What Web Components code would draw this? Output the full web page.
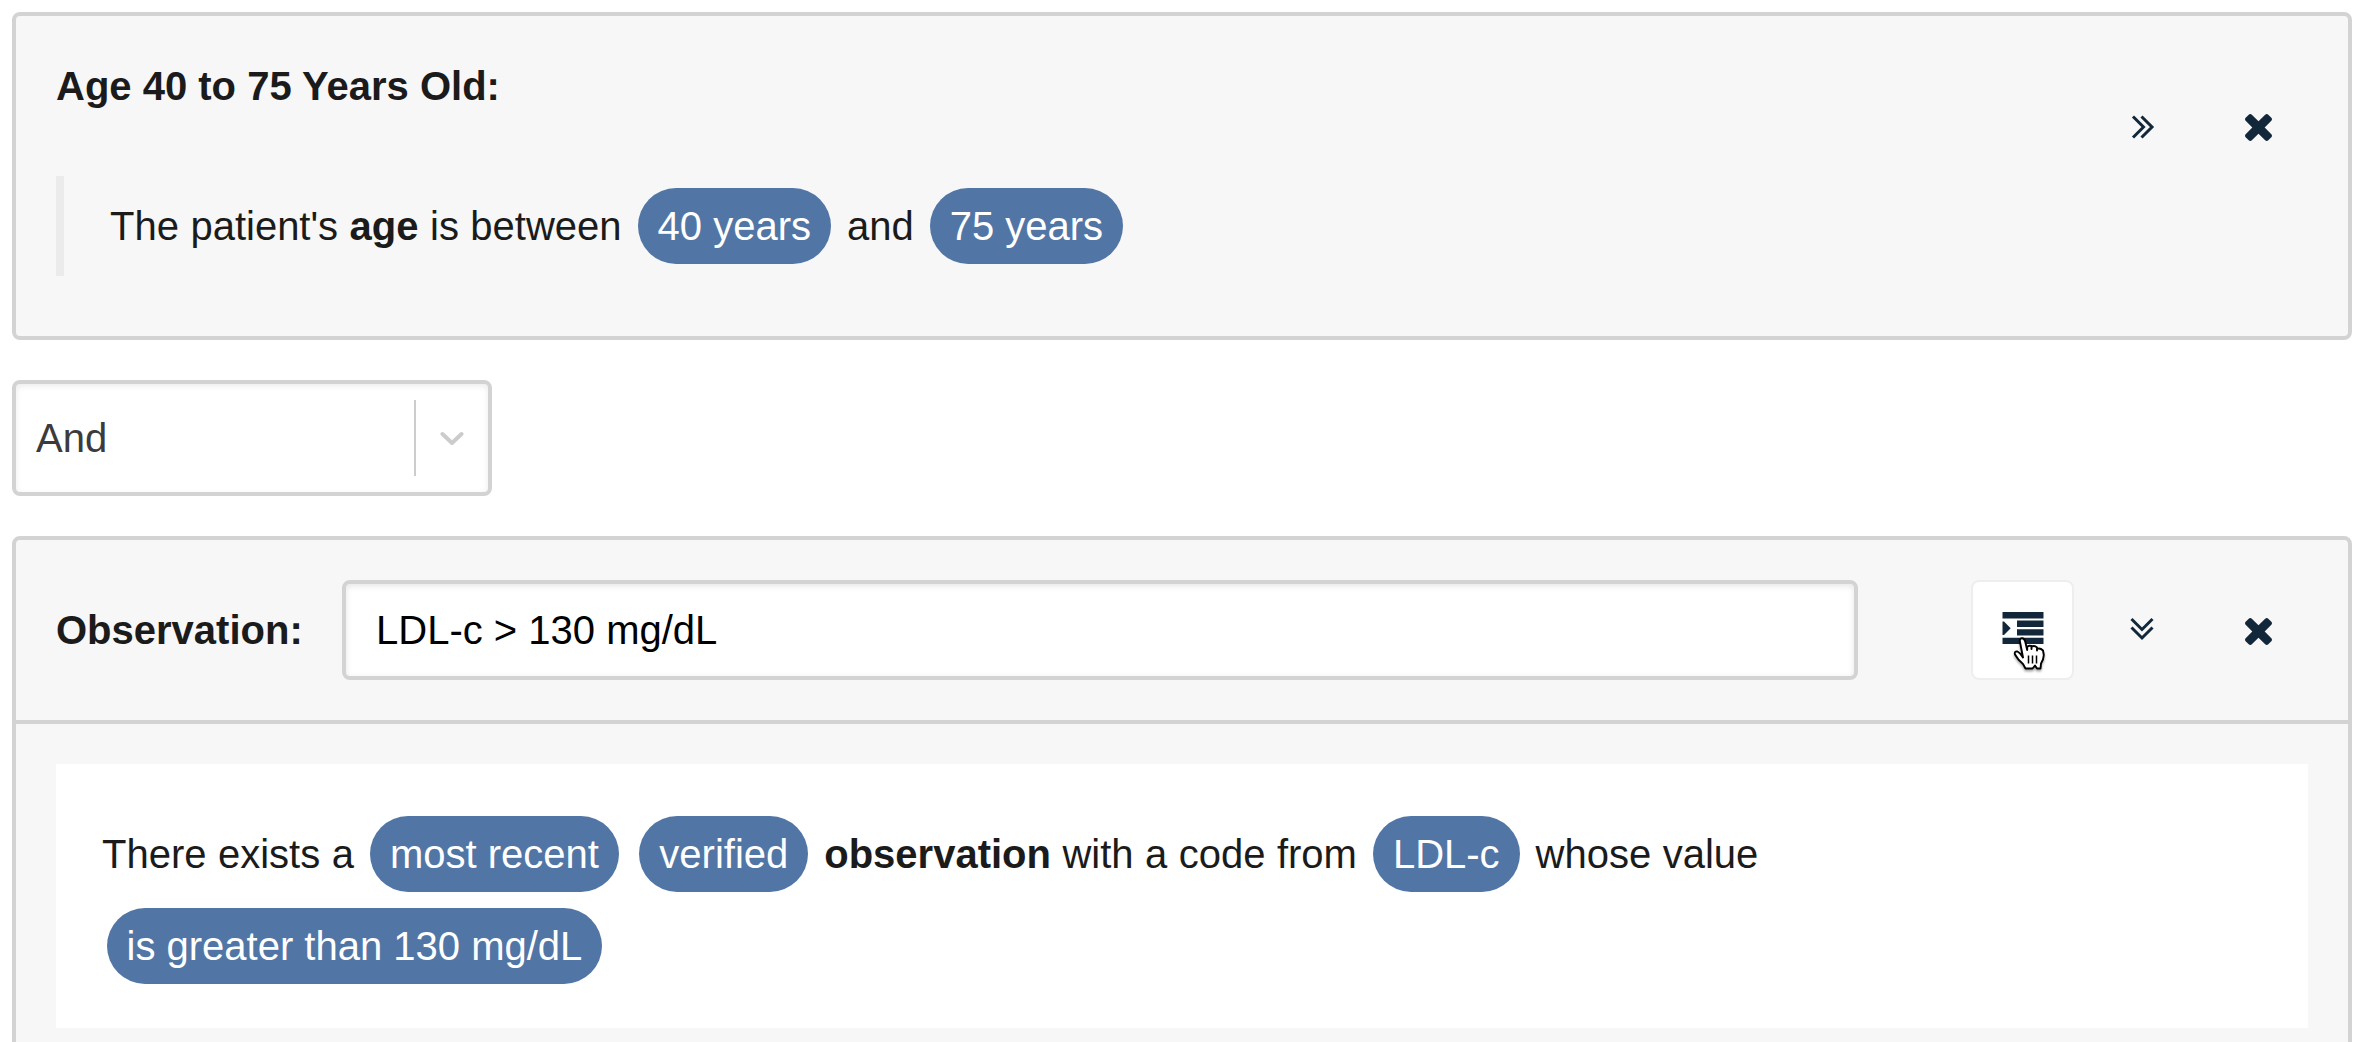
<!DOCTYPE html>
<html lang="en">
<head>
<meta charset="utf-8">
<title>Expression builder</title>
<style>
html,body{margin:0;height:100%;overflow:hidden;background:#fff}
body{font:40px/50px "Liberation Sans",Arial,Helvetica,sans-serif;color:#1b1b1b}
</style>
</head>
<body>
<phrase-builder></phrase-builder>
<script>
const define = (name, html) => {
  const t = document.createElement('template');
  t.innerHTML = html;
  customElements.define(name, class extends HTMLElement {
    constructor() {
      super();
      this.attachShadow({mode: 'open'}).append(t.content.cloneNode(true));
    }
  });
};

define('value-tag', `<style>
:host{display:inline-block;height:76px;line-height:76px;margin:8px 4.5px;padding:0 20px;border-radius:38px;background:#5176a6;color:#fff;white-space:nowrap;word-spacing:0}
</style><slot></slot>`);

define('phrase-text', `<style>
:host{display:block;line-height:76px;word-spacing:.35px}
</style><slot></slot>`);

const icons = {
  right: '<svg width="24" height="26" viewBox="0 0 24 26" fill="none" stroke="#12283a" stroke-width="3"><path d="M2 2.500 12.500 13 2 23.500M10.500 2.500 21 13 10.500 23.500"/></svg>',
  down: '<svg width="26" height="24" viewBox="0 0 26 24" fill="none" stroke="#12283a" stroke-width="3"><path d="M2.500 2 13 12.500 23.500 2M2.500 10.500 13 21 23.500 10.500"/></svg>',
  close: '<svg width="27" height="27" viewBox="110 366 1188 1188" fill="#12283a"><path d="M1298 1322q0 40-28 68l-136 136q-28 28-68 28t-68-28l-294-294-294 294q-28 28-68 28t-68-28l-136-136q-28-28-28-68t28-68l294-294-294-294q-28-28-28-68t28-68l136-136q28-28 68-28t68 28l294 294 294-294q28-28 68-28t68 28l136 136q28 28 28 68t-28 68l-294 294 294 294q28 28 28 68z"/></svg>',
  indent: '<svg width="42" height="32" viewBox="0 0 42 32" fill="#12283a"><path d="M0.500 0h41v6.400h-41zM15 8.600h26.500v6.400h-26.500zM15 17.200h26.500v6.400h-26.500zM.5 25.700h41v6.300h-41zM.5 9.400h1.500L8.700 16.200 2 23H.5z"/></svg>'
};
customElements.define('icon-button', class extends HTMLElement {
  constructor() {
    super();
    this.attachShadow({mode: 'open'}).innerHTML = `<style>
:host{position:relative;display:flex;flex:none;box-sizing:border-box;width:103px;height:100px;align-items:center;justify-content:center}
:host([active]){background:#fff;border:2px solid #eee;border-radius:8px;margin-right:4px}
svg{display:block}
:host([glyph=indent]) svg{margin:0 0 4px 1px}
:host([glyph=right]) svg{margin-top:2px}
:host([glyph=down]) svg{margin:0 1px 2px 0}
:host([glyph=close]) svg{margin:2px 1px 0 0}
</style>${icons[this.getAttribute('glyph')]}<slot></slot>`;
  }
});

define('hand-pointer', `<style>
:host{position:absolute;left:40px;top:55px;display:block}
svg{display:block;overflow:visible;filter:drop-shadow(0 2px 1px rgba(0,0,0,.35))}
</style><svg width="34" height="34" viewBox="0 0 34 34"><path d="M10 20.500 7 5Q6.300 1.500 8.800 1.200 11.300 1 12.200 4.500L14.200 13V10Q15.500 8 18.500 9V12 9.800Q21.500 8 24 10.500V13.500 12Q27 10.500 30 13.500L30.800 18Q30.500 23 28 26.500L27.500 31.500H24L22 28.500 19.500 31.500H12.500L10 27Q5 23 2 17.500 1 14 4.500 14.500 7.500 16 10 20.500Z" fill="#fff" stroke="#000" stroke-width="1.900" stroke-linejoin="round"/><path d="M15.500 18.500v8M19.500 18.500v8M23.500 18.500v8" stroke="#000" stroke-width="1.500"/></svg>`);

define('operator-select', `<style>
:host{display:flex;flex:none;box-sizing:border-box;width:480px;height:116px;border:4px solid #d3d3d3;border-radius:8px;background:#fff;box-shadow:inset 0 2px 6px rgba(0,0,0,.08);align-items:center;color:#3b3b3b;padding:0 24px 0 20px}
span{flex:1}
i{width:2px;height:76px;background:#ccc;margin-right:24px}
svg{display:block;margin-top:2px}
</style><span><slot></slot></span><i></i><svg width="24" height="16" viewBox="0 0 24 16" fill="none" stroke="#ccc" stroke-width="4" stroke-linecap="round" stroke-linejoin="round"><path d="M2.500 3 12 12 21.500 3"/></svg>`);

define('name-field', `<style>
:host{display:flex;flex:none;box-sizing:border-box;width:1516px;height:100px;border:4px solid #d3d3d3;border-radius:8px;background:#fff;box-shadow:inset 0 2px 6px rgba(0,0,0,.1);align-items:center;padding-left:30px;color:#000}
</style><slot></slot>`);

define('age-card', `<style>
:host{display:flex;flex:none;box-sizing:border-box;height:328px;border:4px solid #d3d3d3;border-radius:8px;background:#f7f7f7;padding:0 38px 0 40px;justify-content:space-between}
h3{margin:45px 0 65px;font:inherit;font-weight:bold}
.quote{box-sizing:border-box;height:100px;padding:4px 0 4px 46px;border-left:8px solid #ebebeb}
.quote phrase-text{margin-top:0}
.actions{display:flex;gap:13px;margin-top:60px}
</style><div><h3>Age 40 to 75 Years Old:</h3><div class="quote"><phrase-text>The patient's <b>age</b> is between <value-tag>40 years</value-tag> and <value-tag>75 years</value-tag></phrase-text></div></div>
<div class="actions"><icon-button glyph="right"></icon-button><icon-button glyph="close"></icon-button></div>`);

define('observation-card', `<style>
:host{display:block;flex:none;box-sizing:border-box;height:560px;border:4px solid #d3d3d3;border-radius:8px;background:#f7f7f7}
header{display:flex;box-sizing:border-box;height:184px;padding:0 38px 0 40px;align-items:center;border-bottom:4px solid #d3d3d3}
header b{flex:none;width:286px}
.actions{display:flex;gap:13px;margin-left:auto}
main{margin:40px 40px 0;box-sizing:border-box;height:264px;padding:44px 46px 36px;background:#fff}
</style><header><b>Observation:</b><name-field>LDL-c &gt; 130 mg/dL</name-field><div class="actions"><icon-button glyph="indent" active><hand-pointer></hand-pointer></icon-button><icon-button glyph="down"></icon-button><icon-button glyph="close"></icon-button></div></header>
<main><phrase-text>There exists a <value-tag>most recent</value-tag> <value-tag>verified</value-tag> <b>observation</b> with a code from <value-tag>LDL-c</value-tag> whose value <value-tag>is greater than 130 mg/dL</value-tag></phrase-text></main>`);

define('phrase-builder', `<style>
:host{display:flex;box-sizing:border-box;height:100vh;overflow:hidden;flex-direction:column;gap:40px;padding:12px 16px 0 12px}
</style><age-card></age-card><operator-select>And</operator-select><observation-card></observation-card>`);
</script>
</body>
</html>
